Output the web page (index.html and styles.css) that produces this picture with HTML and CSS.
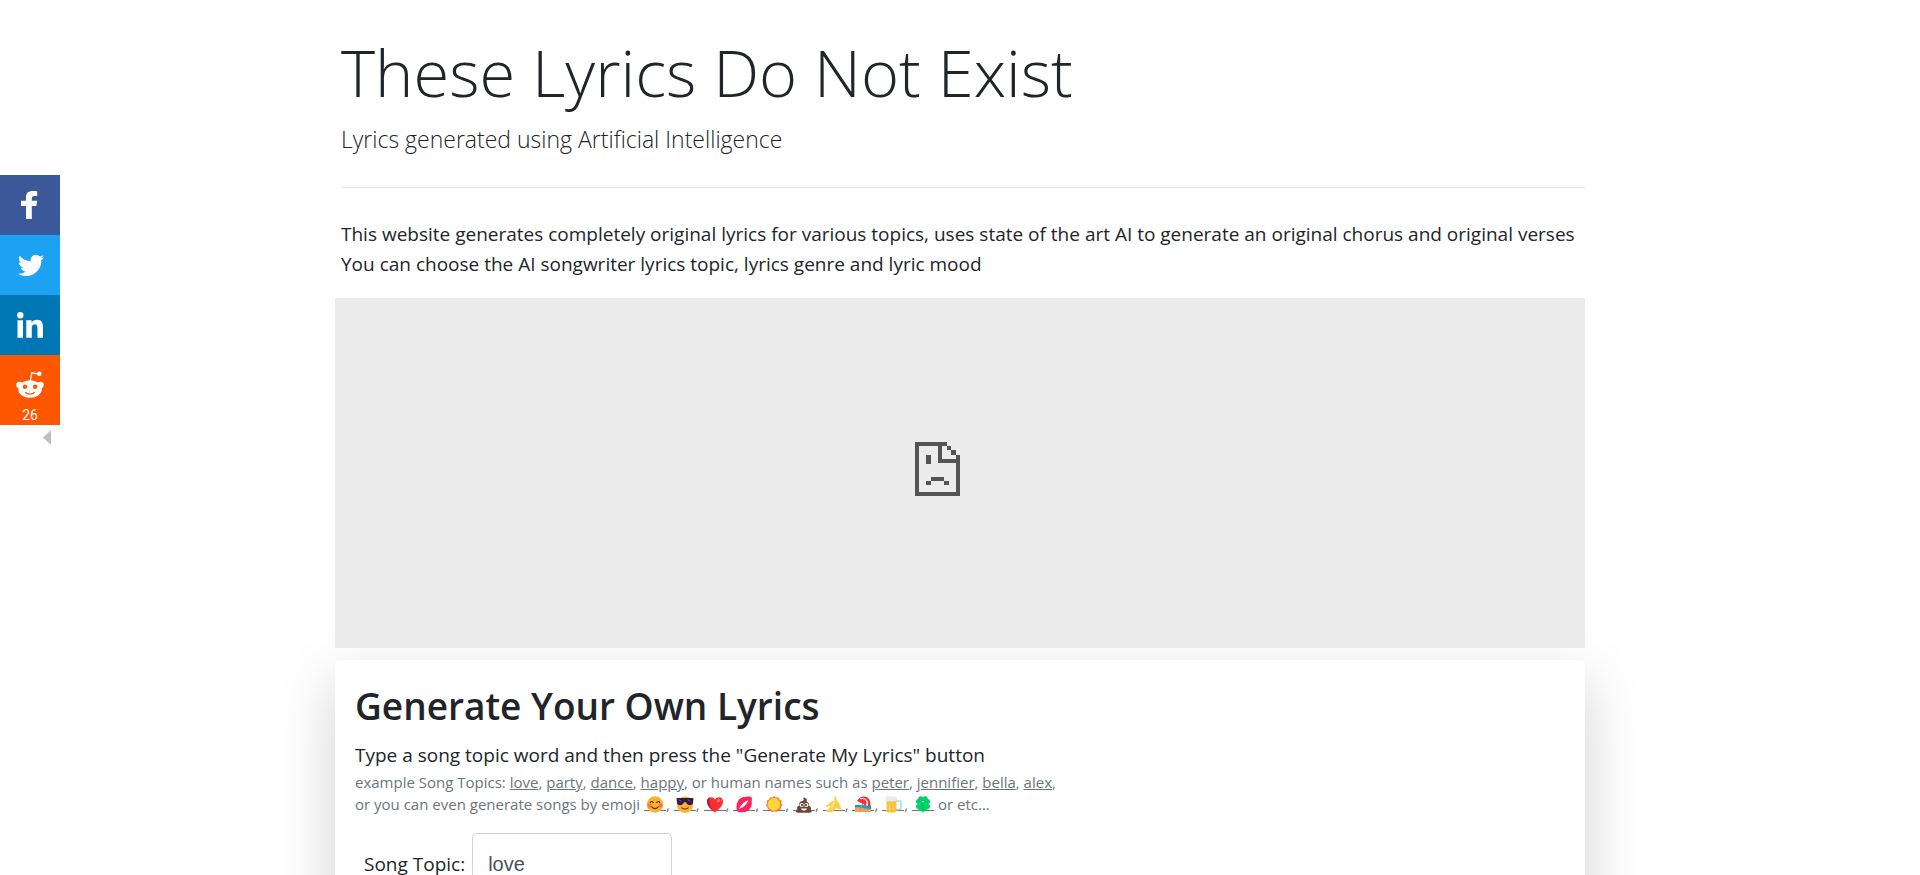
FILE: index.html
```html
<!DOCTYPE html>
<html lang="en">
<head>
<meta charset="utf-8">
<meta name="viewport" content="width=device-width, initial-scale=1">
<title>These Lyrics Do Not Exist</title>
<link rel="stylesheet" href="styles.css">
</head>
<body>
<nav class="share" aria-label="Share">
  <a class="share-link facebook" href="#" aria-label="Facebook">
    <svg viewBox="0 0 60 60"><path d="M26 44V31h-5v-5.300h5v-3.500c0-4.200 2.600-6.200 6.600-6.200 2 0 3.700.1 4.600.2v4.900h-2.900c-2 0-2.500 1-2.500 2.400v2.200h5.400l-.8 5.300h-4.600v13z"/></svg>
  </a>
  <a class="share-link twitter" href="#" aria-label="Twitter">
    <svg viewBox="0 0 60 60"><path transform="translate(13.500 13) scale(1.090)" d="M28 8.557a9.913 9.913 0 0 1-2.828.775 4.930 4.930 0 0 0 2.166-2.725 9.738 9.738 0 0 1-3.130 1.194 4.920 4.920 0 0 0-3.593-1.550 4.924 4.924 0 0 0-4.794 6.049c-4.090-.21-7.720-2.170-10.150-5.150a4.942 4.942 0 0 0-.665 2.477c0 1.710.87 3.214 2.190 4.100a4.968 4.968 0 0 1-2.230-.616v.06c0 2.390 1.700 4.380 3.952 4.830-.414.115-.85.174-1.297.174-.318 0-.626-.03-.928-.086a4.935 4.935 0 0 0 4.600 3.420 9.893 9.893 0 0 1-6.114 2.107c-.398 0-.79-.023-1.175-.068a13.953 13.953 0 0 0 7.550 2.213c9.056 0 14.010-7.507 14.010-14.013 0-.213-.005-.426-.015-.637.96-.695 1.795-1.560 2.455-2.550z"/></svg>
  </a>
  <a class="share-link linkedin" href="#" aria-label="LinkedIn">
    <svg viewBox="0 0 60 60"><circle cx="20.300" cy="20.300" r="3.200"/><path d="M17.500 25.300h5.500v17.500h-5.500zM26.300 25.300h5.300v2.400c.9-1.600 2.700-2.900 5.300-2.900 5 0 6.100 3.300 6.100 8v10h-5.500v-9c0-2.200-.2-4.300-2.700-4.300-2.600 0-3 2-3 4.300v9h-5.500z"/></svg>
  </a>
  <a class="share-link reddit" href="#" aria-label="Reddit, 26 shares">
    <svg viewBox="0 0 60 50"><ellipse cx="30" cy="34" rx="11.800" ry="8.800"/><circle cx="19.600" cy="30" r="3.300"/><circle cx="40.400" cy="30" r="3.300"/><circle cx="39.300" cy="18.700" r="2.300"/><path class="stalk" d="M30.300 26l1.500-8.200 6 1.100"/><g class="cut"><circle cx="24.900" cy="31.700" r="2.200"/><circle cx="35.100" cy="31.700" r="2.200"/></g><path class="smile" d="M25.300 37.300c2.500 2.300 6.900 2.300 9.400 0"/></svg>
    <span class="count">26</span>
  </a>
  <button class="collapse" type="button" aria-label="Hide share bar"></button>
</nav>

<main class="page">
  <header class="intro">
    <h1>These Lyrics Do Not Exist</h1>
    <p class="tagline">Lyrics generated using Artificial Intelligence</p>
    <hr>
    <p class="about">This website generates completely original lyrics for various topics, uses state of the art AI to generate an original chorus and original verses<br>You can choose the AI songwriter lyrics topic, lyrics genre and lyric mood</p>
  </header>

  <section class="frame" aria-label="Content unavailable">
    <svg class="sad" viewBox="0 0 135 162" shape-rendering="crispEdges"><path d="M0 0h96v12H81v39h54v111H0zM12 12v138h111V63H69V12z" fill-rule="evenodd"/><path d="M96 12h13v13H96zM109 25h14v14h-14zM123 39h12v24h-12zM33 39h15v26H33zM48 104h39v13H48zM33 117h15v13H33zM87 117h15v13H87z"/></svg>
  </section>

  <section class="panel">
    <h2>Generate Your Own Lyrics</h2>
    <p class="lead">Type a song topic word and then press the "Generate My Lyrics" button</p>
    <p class="examples">example Song Topics: <a href="#">love</a>, <a href="#">party</a>, <a href="#">dance</a>, <a href="#">happy</a>, or human names such as <a href="#">peter</a>, <a href="#">jennifier</a>, <a href="#">bella</a>, <a href="#">alex</a>,<br>or you can even generate songs by emoji
      <a class="emoji" href="#" aria-label="smile"><svg viewBox="0 0 22 17"><circle cx="11" cy="8.500" r="8.300" fill="#ffb02e"/><circle cx="5.500" cy="9.500" r="2" fill="#ff6f4e"/><circle cx="16.500" cy="9.500" r="2" fill="#ff6f4e"/><path d="M6 7c.7-2 2.700-2 3.400 0M12.600 7c.7-2 2.700-2 3.400 0M7.500 10.500c1.500 2.700 5.500 2.700 7 0" fill="none" stroke="#402a32" stroke-width="1.200"/></svg></a>,
      <a class="emoji" href="#" aria-label="sunglasses"><svg viewBox="0 0 22 17"><circle cx="11" cy="8.700" r="8.200" fill="#ffb02e"/><path d="M2.500 2h17l-.5 5c-.6 3-6 3-7-.8h-2c-1 3.800-6.400 3.800-7 .8z" fill="#321b41"/><path d="M5 3.500l2 2M14 3.500l2 2" stroke="#8d65c5"/><path d="M7.500 11.500c1.500 2 5.500 2 7 0" fill="none" stroke="#402a32" stroke-width="1.200"/></svg></a>,
      <a class="emoji" href="#" aria-label="heart"><svg viewBox="0 0 22 17"><path d="M11 16.500C7 13.500 3 10 3 5.600 3 1 8.500-.2 11 3.500 13.500-.2 19 1 19 5.600c0 4.400-4 7.900-8 10.900z" fill="#f8312f"/><path d="M11 16.500C7 13.500 3 10 3 5.600c0-2 1-3.500 2.400-4C4.500 7 7 13 11 16.500z" fill="#ca0b4a"/><circle cx="14.700" cy="4.500" r="1.800" fill="#f37366"/></svg></a>,
      <a class="emoji" href="#" aria-label="kiss"><svg viewBox="0 0 22 17"><path d="M4 15.500C2.500 10 4 3.500 9 1.500c2-.8 3 0 4-.7 1.500-.8 5-.3 5.500.4 1 2-.2 3 .3 5C19.500 13 13 18.500 4 15.500z" fill="#fd245f"/><path d="M6 13C8 8.500 11 6 15.500 4 14 8 10.500 11.500 6 13z" fill="#fff"/></svg></a>,
      <a class="emoji" href="#" aria-label="sun"><svg viewBox="0 0 22 17"><path d="M11 0l2 1.400 2.400-.2 1 2.200 2.100 1.100-.1 2.400 1 2.100-1.400 2-.4 2.400-2.300.8-1.700 1.700-2.400-.5-2.400.5-1.700-1.700-2.300-.8-.4-2.400L3 9l1-2.100-.1-2.400L6 3.400l1-2.200 2 .2z" fill="#ff822d"/><circle cx="11" cy="8.300" r="6.200" fill="#fcd53f"/></svg></a>,
      <a class="emoji" href="#" aria-label="poop"><svg viewBox="0 0 22 17"><path d="M10 1.800c4-.5 4.500 2.500 3.300 3.700 2.700.5 3.200 2.500 2.200 4.300 2.800.5 3 2.700 2.200 3.700 2.200 1.300 1 3.200-1 3.200H5c-2.600 0-3-2.500-.7-3.400-.8-2 .2-3.600 2.200-3.600C5.600 7 6.800 5.300 9 5.200c1.700-.2 2.300-2 1-3.400z" fill="#6d4534"/><circle cx="8.700" cy="9" r="2" fill="#fff"/><circle cx="13.300" cy="9" r="2" fill="#fff"/><circle cx="9" cy="9" r="1" fill="#1c1c1c"/><circle cx="13" cy="9" r="1" fill="#1c1c1c"/><path d="M8 12.500h6c-.7 2.700-5.300 2.700-6 0z" fill="#fff"/></svg></a>,
      <a class="emoji" href="#" aria-label="banana"><svg viewBox="0 0 22 17"><path d="M11 1l2-.7.8 4.200c4 3 3 6.500 5.200 8.500l-3 .5-2.800-1.700C12 15 8 17 4 16l-.5-2c3-.3 3.500-3 4-4.500L3 11l-.2-1.500C5.500 9 8 5 11.800 4.300z" fill="#ffce45"/><path d="M11.500 5.500c-1.500 3-1.500 4-3 6.500" fill="none" stroke="#fff0a5" stroke-width="1.200"/></svg></a>,
      <a class="emoji" href="#" aria-label="beach"><svg viewBox="0 0 22 17"><path d="M3 9h16v4H3z" fill="#00a6ed"/><path d="M3 11.500c5-1 8 1.500 16 1.500v3H3z" fill="#ff9d4a"/><path d="M11 6.500l-3 8" stroke="#9b9b9b"/><path d="M5 5C8-.5 15-1 17.500 4c1.300 2.500 1 5 .3 7.200z" fill="#f8312f"/><path d="M7 2.700c4-1.500 7-.5 8.500 2.300.7 1.500.8 3 .3 5.200l-3-1.600C13.500 5 11 3 7 2.700z" fill="#f4f0f4"/><path d="M10 3c4-.5 5 3 4 6.300l-4.500-2.200z" fill="#f8312f"/></svg></a>,
      <a class="emoji" href="#" aria-label="beer"><svg viewBox="0 0 22 17"><path d="M14 5h3.500q1.500 0 1.500 1.500v5q0 2-2 2h-3" fill="none" stroke="#a5d8ff" stroke-width="1.600"/><path d="M4.500 3h10v11.500q0 2-2 2h-6q-2 0-2-2z" fill="#f9c23c"/><path d="M7.500 8v6M11.500 8v6" stroke="#ffd95e" stroke-width="1.300"/><path d="M3.500 3C3.500 0 6 0 7 .8 9-.5 11-.2 12 .8c2-.7 3.700.8 3 3.200-1 1.500-2.500 1.500-3.300.7L10 6 7.500 5C5 6.500 3.500 5 3.500 3z" fill="#eee8ee"/></svg></a>,
      <a class="emoji" href="#" aria-label="clover"><svg viewBox="0 0 22 17"><g fill="#00d26a"><circle cx="8.800" cy="2.900" r="2.600"/><circle cx="13.200" cy="2.900" r="2.600"/><circle cx="6.500" cy="5.500" r="2.500"/><circle cx="15.500" cy="5.500" r="2.500"/><circle cx="6.500" cy="10.500" r="2.500"/><circle cx="15.500" cy="10.500" r="2.500"/><circle cx="8.800" cy="13" r="2.400"/><circle cx="13.200" cy="13" r="2.400"/><path d="M7 3l4 3 4-3 2 3-3 2 3 3-3 3-3-3-3 3-3-3 3-3-3-3z"/></g><path d="M11 8c.2 4 .2 6 0 8.500" fill="none" stroke="#00b85b" stroke-width="1.200"/></svg></a> or etc...</p>
    <form class="topic">
      <label for="topic">Song Topic:</label>
      <input id="topic" type="text" value="love">
    </form>
  </section>
</main>
</body>
</html>
```
FILE: styles.css
```css
* { box-sizing: border-box; }
body {
  margin: 0;
  height: 100vh;
  overflow: hidden;
  background: #fff;
  color: #212529;
  font: 400 19px/30px "Open Sans", "Noto Sans", sans-serif;
}
h1, h2, p { margin: 0; }

.page { max-width: 1250px; margin: 0 auto; padding-top: 28px; }
.intro { padding-left: 6px; }
h1 { font-size: 65px; font-weight: 300; line-height: 88px; }
.tagline { margin-top: 8px; font-size: 23px; font-weight: 300; line-height: 30px; }
hr { margin: 33px 0 31px; border: 0; border-top: 1px solid #e3e3e3; }

.frame {
  position: relative;
  display: flex;
  justify-content: center;
  align-items: flex-start;
  height: 350px;
  margin-top: 19px;
  padding: 144px 45px 0 0;
  background: #ececec;
}
.sad { width: 45px; height: 54px; fill: #545454; }

.panel {
  margin-top: 12px;
  padding: 20px 20px 80px;
  border-radius: 5px;
  background: #fff;
  box-shadow: 0 20px 60px rgba(0, 0, 0, .175);
}
h2 { font-size: 37px; font-weight: 600; line-height: 52px; }
.lead { margin-top: 8px; }
.examples { margin-top: 1px; color: #6c757d; font-size: 15px; line-height: 22px; }
.examples a { color: inherit; }
.examples .emoji {
  display: inline-block;
  width: 22px;
  height: 17px;
  line-height: 17px;
  vertical-align: -3px;
  background: linear-gradient(#6c757d, #6c757d) 0 14px / 100% 1px no-repeat;
}
.emoji svg { display: block; width: 22px; height: 17px; }

.topic { display: flex; align-items: center; gap: 7px; margin-top: 18px; padding-left: 9px; }
.topic input {
  width: 200px;
  height: 62px;
  padding: 0 15px;
  border: 1px solid #ced4da;
  border-radius: 5px;
  color: #495057;
  font: 20px "Liberation Sans", Arial, sans-serif;
}

.share { position: fixed; top: 20%; left: 0; z-index: 2; width: 60px; }
.share-link { display: block; color: #fff; text-decoration: none; }
.share-link svg { display: block; width: 60px; fill: #fff; }
.facebook { background: #3b5998; }
.twitter { background: #1da1f2; }
.linkedin { background: #0077b5; }
.reddit { height: 70px; background: #ff5700; text-align: center; }
.reddit .cut { fill: #ff5700; }
.reddit .smile { fill: none; stroke: #ff5700; stroke-width: 1.3; }
.reddit .stalk { fill: none; stroke: #fff; stroke-width: 1.3; }
.count { display: block; font: 14px/20px Roboto, Arial, sans-serif; }
.collapse {
  display: block;
  width: 8px;
  height: 15px;
  margin: 5px 9px 0 auto;
  padding: 0;
  border: 0;
  background: #bfbfbf;
  clip-path: polygon(100% 0, 100% 100%, 0 50%);
}
```
